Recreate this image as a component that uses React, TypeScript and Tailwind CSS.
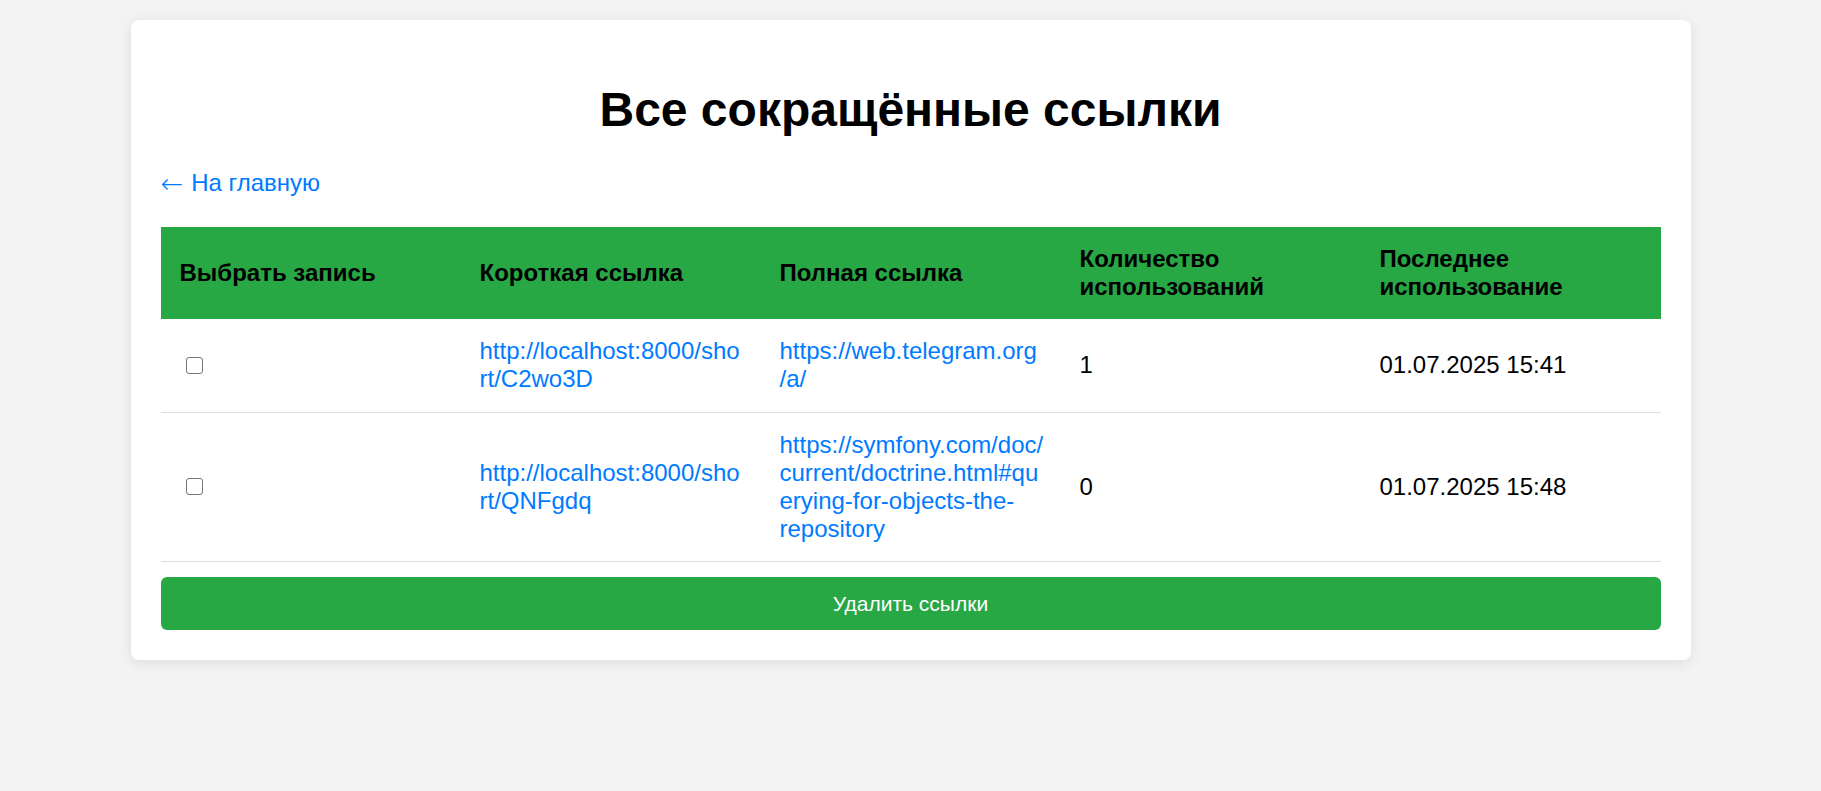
const LINKS = [
  {
    id: 1,
    short: 'http://localhost:8000/short/C2wo3D',
    full: 'https://web.telegram.org/a/',
    count: 1,
    lastUsed: '01.07.2025 15:41',
  },
  {
    id: 2,
    short: 'http://localhost:8000/short/QNFgdq',
    full: 'https://symfony.com/doc/current/doctrine.html#querying-for-objects-the-repository',
    count: 0,
    lastUsed: '01.07.2025 15:48',
  },
]

const HEADERS = [
  'Выбрать запись',
  'Короткая ссылка',
  'Полная ссылка',
  'Количество использований',
  'Последнее использование',
]

export default function App() {
  return (
    <div className="min-h-[791px] bg-[#f3f3f3] pt-[20px] font-['Liberation_Sans',Arial,sans-serif]">
      <div className="mx-auto w-[1560px] bg-white rounded-[8px] p-[30px] shadow-[0_3px_14px_rgba(0,0,0,0.09)]">

        {/* Title */}
        <h1 className="text-[48px] font-bold text-black text-center leading-[55px] mt-[32px] mb-[32px]">
          Все сокращённые ссылки
        </h1>

        <a href="#" className="text-[24px] leading-[28px] h-[28px] text-[#007bff] flex items-center w-fit">
          <span className="font-['DejaVu_Sans',sans-serif] font-extralight text-[27px] leading-none mr-[8px]">←</span>
          <span>На главную</span>
        </a>

        {/* Links table */}
        <table className="w-[1500px] table-fixed border-collapse mt-[30px] text-[24px] leading-[28px]">
          <thead>
            <tr className="bg-[#28a745]">
              {HEADERS.map((h) => (
                <th key={h} className="text-left align-middle font-bold text-black py-[18px] pl-[19px] pr-[17px]">
                  {h}
                </th>
              ))}
            </tr>
          </thead>
          <tbody>
            {LINKS.map((link) => (
              <tr key={link.id} className="border-b-[1.5px] border-[#dddddd]">
                <td className="py-[18.25px] pl-[19px] pr-[17px] align-middle">
                  <input
                    type="checkbox"
                    className="appearance-none block ml-[6px] w-[17px] h-[17px] border-[1.5px] border-[#767676] rounded-[3px] bg-white"
                  />
                </td>
                <td className="py-[18.25px] pl-[19px] pr-[17px] align-middle break-words">
                  <a href="#" className="text-[#007bff]">{link.short}</a>
                </td>
                <td className="py-[18.25px] pl-[19px] pr-[17px] align-middle break-words">
                  <a href="#" className="text-[#007bff]">{link.full}</a>
                </td>
                <td className="py-[18.25px] pl-[19px] pr-[17px] align-middle text-black">{link.count}</td>
                <td className="py-[18.25px] pl-[19px] pr-[17px] align-middle text-black">{link.lastUsed}</td>
              </tr>
            ))}
          </tbody>
        </table>

        <button className="mt-[15px] w-full h-[53px] bg-[#28a745] text-white text-[21px] rounded-[6px]">
          Удалить ссылки
        </button>

      </div>
    </div>
  )
}
